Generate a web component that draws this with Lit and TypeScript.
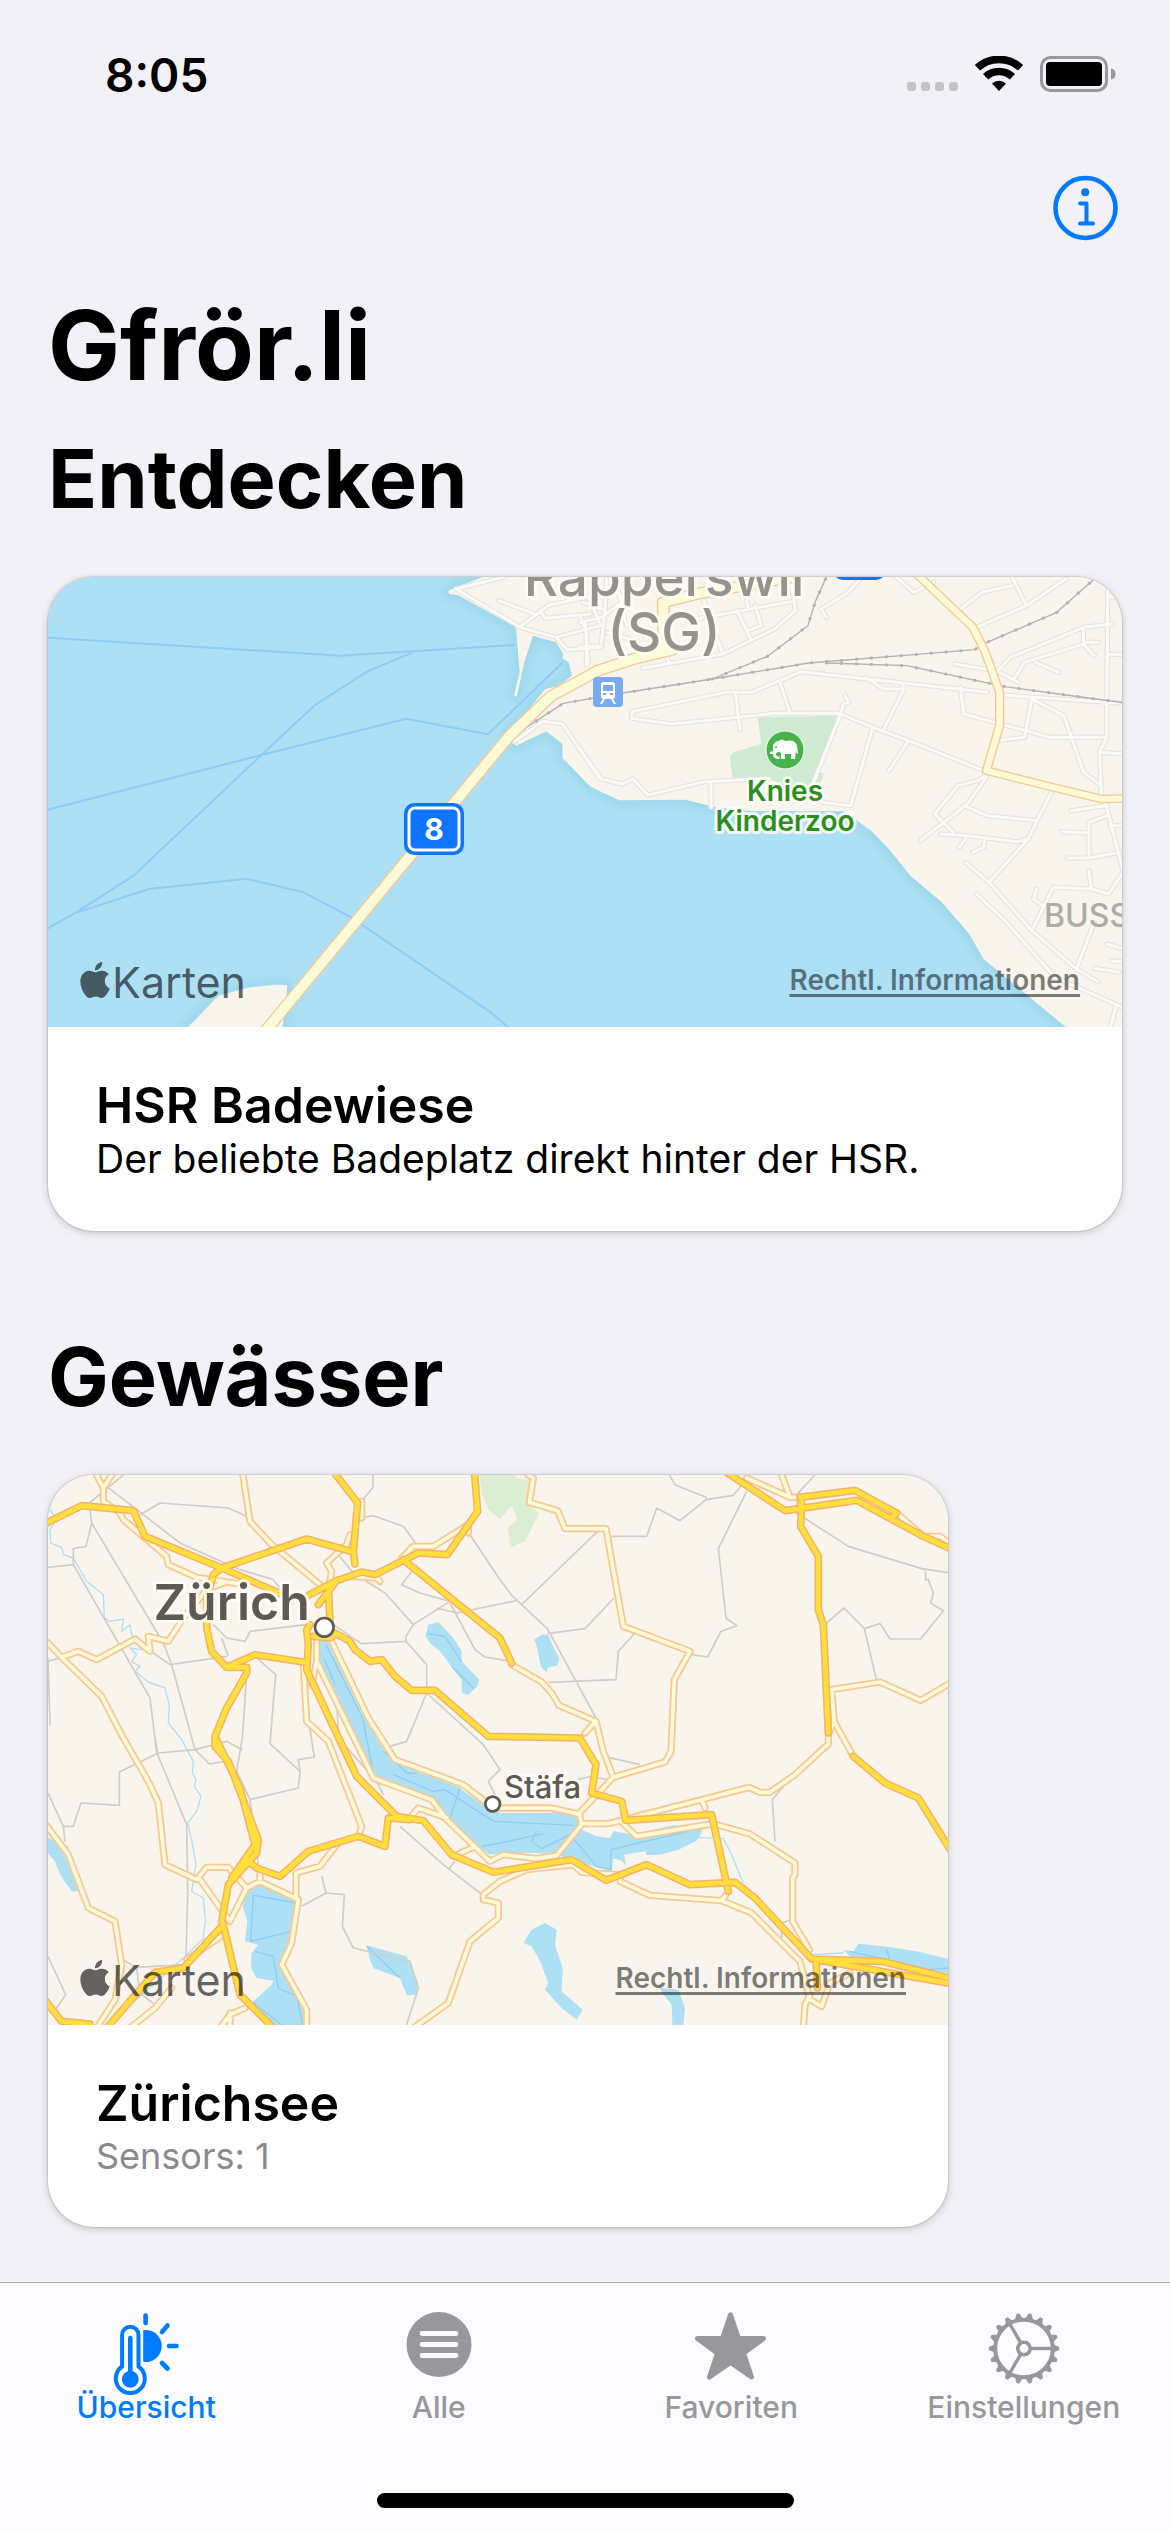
import { LitElement, html, svg, css } from "lit";
import { customElement, property, state } from "lit/decorators.js";
import { classMap } from "lit/directives/class-map.js";

/* ---------- Map of the lake shore at Rapperswil ---------- */

const shore =
  "M1240,54 1165,85 1143,95 1145,106 1170,108 1325,200 1333,210 1343,340 1327,410 1335,412 1355,315 1380,230 1445,250 1465,285 1463,298 1480,310 1490,350 1450,382 1415,390 1350,475 1310,530 1322,548 1333,560 1418,517 1463,555 1463,597 1540,682 1568,697 1622,724 1807,722 1892,745 1992,756 2252,757 2327,815 2377,870 2437,950 2525,1030 2602,1125 2642,1200 2872,1404 3060,1440 3060,30 1240,30Z " +
  "M400,1420 500,1310 580,1286 660,1277 692,1278 690,1330 676,1420Z";

const ferries =
  "M22,236 840,290 1330,258 M1042,281 917,337 770,438 620,588 262,950 105,1058 22,1108 " +
  "M22,752 620,588 1026,479 1254,526 1462,312 M105,1060 305,990 578,959 733,998 880,1080 905,1100 1262,1360 1310,1404";

const townStreets =
  "M1285,125 1385,165 M1400,155 1415,178 1540,165 M1345,203 1425,138 1530,115 M1300,54 1165,90 1345,205 1445,235 1475,272 1568,265 " +
  "M1445,235 1568,200 M1512,170 1530,220 1530,318 M1535,110 1568,195 M1328,548 1408,487 1463,495 1568,660";

const eastStreets =
  "M0,190 60,175 130,120 M75,60 70,150 60,250 M0,265 60,260 M15,190 22,315 M75,220 140,240 M10,130 60,150 M100,60 130,200 " +
  "M345,120 400,285 175,328 M240,280 248,310 M300,185 590,128 M590,54 603,155 545,210 400,285 M440,155 480,245 M490,140 508,200 470,215 M465,100 470,150 " +
  "M785,60 745,105 675,150 690,175 M885,54 935,100 990,70 M1065,150 1125,100 1210,80 M1110,205 1250,140 1360,60 M1210,54 1250,140 " +
  "M1170,335 1205,295 1410,205 1490,195 M1410,205 1410,255 1245,310 1215,360 M1410,250 1450,250 M1410,255 1440,290 M1275,310 1340,340 M1048,315 1165,335 1228,370 " +
  "M1478,80 1475,430 1475,535 1455,580 1460,720 M1480,285 1530,288 M1478,110 1530,120 M1185,408 1530,434 M1265,420 1355,470 1410,640 1460,680 M1265,420 1245,535 1165,545 " +
  "M1065,385 1075,465 1315,535 1475,535 M1460,580 1530,585 M530,660 500,660 350,668 190,708 148,660 118,675 60,660 0,570 M367,670 367,745 " +
  "M145,478 145,458 410,400 480,400 620,338 905,372 1140,400 M145,478 255,495 440,475 545,463 725,463 M435,400 448,512 M560,370 588,460 M800,355 850,390 905,390 " +
  "M905,372 905,395 848,515 M742,410 752,430 738,435 730,465 650,680 M730,465 820,505 920,545 1130,635 M820,505 758,740 680,730 M920,545 865,635 " +
  "M1135,650 1115,665 1058,680 993,765 1045,820 M1138,655 1085,735 955,843 M1075,740 1140,770 1280,785 M1325,690 1280,785 1255,840 1145,970 " +
  "M1010,825 1085,830 1225,848 1255,840 M1085,830 1063,865 M1133,840 1130,865 1100,880 M1375,755 1470,740 M1470,725 1530,975 M1350,818 1425,822 " +
  "M1425,895 1425,790 1475,770 M1365,897 1425,897 1510,880 M1485,800 1530,800 M1425,935 1432,990 M1278,990 1270,1020 1295,1040 M1265,1115 1325,985 1432,990 1480,1005 1530,925 " +
  "M1080,910 1150,975 1265,1115 1390,1230 1450,1268 M1110,1005 1190,1085 1330,1255 1530,1350 M1440,1090 1390,1230 M1440,1228 1510,1240 M1500,1345 1485,1404 M1475,1155 1530,1172 M1490,1205 1530,1210";

const rails =
  "M1355,510 1465,433 1560,415 1632,402 1882,360 2152,312 2412,290 2617,272 2652,250 2847,160 2952,60 " +
  "M1882,360 2037,292 2150,200 2172,125 2202,54 M2202,312 2427,320 2697,382 2852,405 3040,432";

const mainRoads = "M628,1420 690,1340 1315,530 1430,412 1562,335 1662,300 1772,272 M1747,265 1745,130 1842,104 2110,54";
const ringRoad = "M2450,40 2612,205 2647,280 2687,400 2687,500 2650,635 2837,685 2972,720 3050,718";

const lakeShoreMap = () => svg`
  <svg class="map" viewBox="0 0 1074 450" preserveAspectRatio="xMidYMid slice" aria-hidden="true">
    <defs>
      <filter id="shallow" x="-5%" y="-5%" width="110%" height="110%"><feGaussianBlur stdDeviation="12" /></filter>
    </defs>
    <rect width="1074" height="450" class="water" />
    <g transform="translate(-8 -18) scale(.35714 .33333)">
      <path d=${shore} fill="none" stroke="#9cd8ea" stroke-width="34" filter="url(#shallow)" />
      <path d=${ferries} class="ferry wide" />
      <path d=${shore} class="land" />
      <path d="M2010,475 2237,470 2172,640 2195,642 2180,690 2100,690 2037,655 1939,657 1932,590 1942,580 2019,555Z" fill="#cfead2" />
      <path d=${townStreets} class="street-case" />
      <g transform="translate(1512 0)"><path d=${eastStreets} class="street-case" /></g>
      <path d=${townStreets} class="street" />
      <g transform="translate(1512 0)"><path d=${eastStreets} class="street" /></g>
      <path d=${rails} class="rail" />
      <path d=${rails} class="rail-ties" />
      <path d=${mainRoads} class="pale-case" stroke-width="36" />
      <path d=${ringRoad} class="pale-case" stroke-width="26" />
      <path d=${mainRoads} class="pale" stroke-width="28" />
      <path d=${ringRoad} class="pale" stroke-width="18" />
    </g>
    <rect x="785" y="-48" width="53" height="51" rx="10" fill="#0f74ff" />
    <g text-anchor="middle">
      <g class="halo" fill="#96928c" font-size="53" font-weight="500">
        <text x="616" y="19">Rapperswil</text>
        <text x="616" y="74">(SG)</text>
      </g>
      <g class="halo" fill="#2a8f1f" font-size="28" font-weight="600">
        <text x="737" y="224">Knies</text>
        <text x="737" y="254">Kinderzoo</text>
      </g>
    </g>
    <text x="996" y="350" fill="#adaba6" font-size="32" font-weight="500">BUSS</text>
    <rect x="356" y="226" width="60" height="52" rx="10" fill="#0f74ff" />
    <rect x="361" y="231" width="50" height="42" rx="6" fill="none" stroke="#fff" stroke-width="3" />
    <text x="386" y="263" text-anchor="middle" fill="#fff" font-size="30" font-weight="700">8</text>
    <rect x="545" y="100" width="30" height="30" rx="4" fill="#78aaf0" />
    <path fill="#fff" fill-rule="evenodd"
      d="M556,105h8q3,0 3,3v11q0,3 -3,3h-8q-3,0 -3,-3v-11q0,-3 3,-3zM555,108v6h10v-6zM555,116v2h3v-2zM562,116v2h3v-2z" />
    <path d="M556,122 553,127M564,122 567,127" stroke="#fff" stroke-width="2" />
    <g transform="translate(737 173)">
      <circle r="19" fill="#45b44c" stroke="#f4fbf2" stroke-width="1" />
      <path fill="#fff"
        d="M-12,-3C-12,-7 -9,-9 -6,-9C-4,-11 -1,-10 0,-9C4,-10 11,-10 12,-4L13,3L12,4L11,1L10,9H6V4H0V9H-4L-4,3C-6,1 -9,2 -9,4C-9,7 -6,6 -5,7L-6,9C-10,9 -12,7 -12,4L-15,4V2L-12,1Z" />
      <circle cx="-9" cy="-3" r="1" fill="#45b44c" />
    </g>
  </svg>`;

/* ---------- Map of Lake Zurich ---------- */

const park = "M1318,51 1325,105 1345,155 1380,183 1415,143 1433,185 1403,210 1412,270 1455,250 1498,165 1460,130 1475,70 1430,60 1425,51Z";

const lakes =
  "M838,540 838,610 880,690 955,850 1010,955 1130,1000 1180,1030 1240,1100 1320,1168 1350,1190 1380,1185 1490,1185 1550,1190 1580,1200 1670,1228 1715,1240 1720,1202 1745,1208 1758,1225 1752,1190 1815,1180 1820,1192 1860,1190 1915,1175 1970,1148 1985,1125 1985,1110 1900,1102 1780,1130 1720,1120 1710,1140 1670,1135 1625,1115 1615,1072 1555,1055 1530,1065 1380,1065 1330,1040 1250,985 1065,915 1028,870 968,770 915,660 862,550Z " +
  "M1157,535 1165,500 1195,492 1240,540 1265,580 1265,610 1318,665 1312,685 1285,710 1265,705 1265,665 1230,620 1200,580 1170,555Z " +
  "M1483,545 1505,530 1523,530 1557,600 1553,622 1523,630 1520,642 1503,628 1490,563Z " +
  "M24,1140 45,1145 85,1165 85,1195 115,1300 95,1300 60,1250 45,1210 24,1185Z " +
  "M620,1300 665,1280 740,1310 775,1330 755,1440 725,1520 790,1660 790,1701 690,1701 635,1635 695,1580 700,1568 650,1560 633,1530 635,1485 655,1460 615,1450 622,1390 608,1345Z " +
  "M980,1462 1100,1495 1135,1575 1130,1610 1100,1612 1080,1560 1000,1530 990,1505Z " +
  "M1515,1395 1550,1415 1545,1460 1568,1530 1565,1600 1628,1655 1610,1685 1565,1650 1515,1595 1525,1575 1500,1510 1475,1465 1450,1455 1475,1415Z " +
  "M1855,1573 1865,1590 1915,1595 1935,1650 1930,1701 1897,1701 1895,1640 1862,1600Z " +
  "M2410,1475 2440,1480 2455,1457 2530,1465 2630,1480 2724,1502 2724,1545 2670,1535 2560,1510 2470,1500 2430,1495Z";

const rivers =
  "M24,145 50,185 30,215 32,255 65,268 70,290 100,300 140,370 190,410 193,480 210,490 250,483 245,520 270,500 275,530 305,575 270,570 290,590 275,610 300,625 285,640 325,672 375,690 388,740 385,795 425,845 460,910 457,945 468,965 463,985 483,1015 470,1060 443,1095 458,1160 468,1220 455,1300 490,1320 497,1390 490,1430 492,1440 430,1500 260,1650 " +
  "M1970,1138 2050,1142 2075,1190 2110,1275 M2310,1490 2410,1485";

const lakeLines =
  "M858,560 968,780 1000,945 M852,600 885,680 M1030,880 1100,945 1130,945 M1060,950 1180,1000 M1260,990 1230,1080 M1180,1000 1215,995 1360,1090 1620,1103 M1325,1165 1380,1155 1510,1127 M1490,1120 1475,1150 1505,1172 1590,1130 1670,1225 1712,1235 1712,1175 1985,1110 " +
  "M770,1335 640,1312 632,1450 755,1420 M645,1480 700,1495 715,1590 770,1615 788,1700 M640,1635 725,1700 M980,1465 1080,1560 M1160,527 1215,535 1265,612 M1235,625 1300,690 M2430,1480 2670,1535 2724,1530 M2540,1475 2550,1510";

const borders =
  "M24,328 100,320 330,720 350,885 M100,320 100,272 138,265 155,195 148,135 250,51 M155,195 370,555 395,620 465,875 M200,85 420,255 600,335 700,365 720,390 M300,170 360,135 565,150 625,178 M999,51 999,88 965,130 M965,180 1000,173 1090,205 1130,260 " +
  "M24,610 65,598 M340,585 390,620 560,595 M520,500 560,540 615,550 630,520 800,500 M545,540 565,595 M640,590 707,650 690,857 M620,650 607,840 M1290,230 1380,365 1415,412 1445,440 1522,512 1668,780 M895,290 940,345 1035,405 1120,500 1230,430 1140,405 1085,380 1130,320 " +
  "M1190,450 1250,465 1428,428 M1230,435 1305,575 1335,597 1400,608 M880,500 965,557 1098,550 1098,535 1120,500 M1098,550 1160,620 1160,705 1100,850 M1160,705 1330,860 1380,935 1345,970 1365,1010 M24,600 30,800 " +
  "M1445,440 1675,218 M1710,235 1820,235 1850,150 1920,188 1998,125 1998,118 1905,80 1888,51 M1998,125 2080,112 2130,51 M2120,100 2035,272 2058,480 2090,503 2043,520 2003,597 1955,590 M1522,527 1635,512 1722,420 M1525,673 1728,665 1735,580 1785,525 " +
  "M2325,51 2270,110 2270,165 2425,265 2645,332 2724,344 M2657,335 2657,365 2665,365 2680,405 2672,435 2710,458 2642,543 2550,543 2520,497 2473,512 2412,450 2360,495 M2473,512 2510,668 " +
  "M24,1005 70,1105 75,1150 M70,1105 100,1105 123,1035 238,1042 238,942 355,885 465,875 560,850 607,875 M345,840 355,895 440,1100 443,1300 438,1500 M465,875 508,918 555,910 M607,840 590,940 630,1025 655,1220 M630,1025 775,990 780,940 690,857 M780,940 775,905 823,897 800,750 " +
  "M890,720 895,840 1010,970 1030,1010 M1050,865 1100,850 M1080,1105 1210,1220 1320,1305 M1245,1210 1225,1235 M785,1345 858,1305 845,1255 M858,1305 913,1310 907,1405 940,1470 1110,1510 1135,1590 1100,1700 M24,1495 77,1610 50,1650 M250,1505 290,1530 300,1605 345,1640 M290,1528 430,1520 " +
  "M1705,898 1800,920 M1540,985 1650,955 1705,965 M2230,985 2197,1025 2205,1150 M2225,1395 2260,1383 M2225,1395 2225,1450";

const paleRoads =
  "M170,51 190,90 190,130 240,165 250,185 380,295 385,320 470,358 600,378 M215,51 190,90 M609,51 630,190 690,255 840,380 M24,555 65,598 115,580 170,605 285,543 330,580 325,535 385,550 430,480 500,395 550,375 " +
  "M65,598 185,715 250,840 325,970 355,1035 375,1220 470,1265 500,1228 565,1228 620,1290 660,1270 775,1325 755,1455 725,1520 800,1655 800,1710 M480,1265 570,1390 620,1290 M660,1240 660,1270 M768,1320 768,1245 840,1225 890,1160 " +
  "M10,1090 85,1190 145,1350 225,1390 245,1520 225,1625 170,1710 M550,1430 440,1505 M395,1590 345,1650 270,1710 M540,1710 570,1670 615,1650 M570,1665 570,1710 " +
  "M830,540 830,610 1000,960 1175,1025 1220,1085 1350,1210 1390,1190 1490,1202 1550,1192 1625,1100 1618,1065 1720,958 M830,610 815,680 M1305,1165 1240,1195 M1110,1080 1135,1050 1220,1080 M790,615 800,790 865,850 965,1105 955,1135 " +
  "M870,540 985,780 1065,905 1270,980 1360,1050 1535,1050 1615,1068 M1625,1097 1705,1097 1740,1088 1790,1135 2020,1097 2130,1128 2265,1215 2265,1250 2258,1260 2258,1390 2308,1475 M1985,1025 1995,1050 " +
  "M2365,825 2365,858 2265,950 2190,1003 2160,1003 2128,988 1985,1025 1740,1088 M1720,958 1875,912 1893,880 1903,665 1950,580 1750,505 1698,212 1575,212 1553,158 1468,133 1480,60 1465,51 " +
  "M1415,620 1505,672 1535,705 1557,742 1668,790 1690,880 1720,958 M1668,790 1635,825 M2365,830 2382,790 2375,695 2520,672 2642,727 2740,670 M2382,790 2440,895 M2225,51 2250,118 2285,118 M2120,60 2250,118 M2570,165 2650,235 2700,235 2740,265 " +
  "M1085,300 1120,265 1180,265 1285,200 1285,225 M930,230 920,260 860,315 875,340 870,370 M965,130 965,180 M925,355 1010,360 1020,370 M1600,1220 1460,1235 1380,1270 1330,1310 1330,1325 1375,1335 1375,1380 1290,1450 1225,1635 1120,1710 " +
  "M1600,1220 1625,1243 1740,1250 1740,1270 1830,1312 2045,1328 2135,1365 2280,1510 2310,1625 2345,1645 2370,1575 2430,1545 M2045,1328 2065,1300 M2310,1610 2295,1640 2290,1710";

const highways =
  "M10,200 125,143 280,158 315,235 545,330 740,415 M545,330 800,243 940,282 M880,40 953,135 940,282 945,318 M545,330 520,350 500,420 500,510 515,580 560,628 645,590 790,612 M560,628 620,628 620,645 560,750 525,835 525,865 565,910 655,1145 650,1185 565,1280 545,1390 550,1400 600,1610 700,1710 " +
  "M525,835 600,990 645,1160 575,1260 M625,1210 650,1230 720,1255 805,1180 955,1135 1035,1165 1045,1080 1110,1085 M550,1400 430,1530 345,1543 200,1710 M10,1620 65,1690 150,1698 " +
  "M1303,40 1313,160 1222,290 1135,285 1005,350 965,342 890,368 805,412 M890,368 835,440 M865,390 870,490 M1090,305 1380,540 1415,615 M820,535 870,540 885,525 930,550 945,575 990,610 1025,605 1065,655 1115,697 1185,697 1345,835 1620,840 1668,920 1655,1005 1745,1030 1757,1087 2015,1070 2065,1300 " +
  "M810,500 800,515 805,560 800,635 950,955 1070,1075 1150,1088 1235,1190 1360,1243 1595,1205 1698,1267 1820,1220 1950,1280 2085,1273 2145,1320 2315,1503 2525,1510 2740,1563 M2315,1503 2740,1578 M2328,1510 2333,1590 " +
  "M2055,40 2235,158 2450,127 2650,235 2740,276 M2280,118 2445,97 2570,165 2555,180 M2285,118 2282,205 2335,295 2335,455 2350,500 2365,825 M2440,895 2535,975 2635,1020 2740,1190";

const lakeZurichMap = () => svg`
  <svg class="map" viewBox="24 51 2700 1650" preserveAspectRatio="xMidYMid slice" aria-hidden="true">
    <rect x="24" y="51" width="2700" height="1650" class="land" />
    <path d=${park} fill="#dbeed2" />
    <path d=${lakes} class="water" />
    <path d=${rivers} fill="none" stroke="#ade0f5" stroke-width="4" />
    <path d=${lakeLines} class="ferry" />
    <path d=${borders} class="border" />
    <path d=${paleRoads} class="pale-case" stroke-width="22" />
    <path d=${paleRoads} class="pale" stroke-width="11" />
    <path d=${highways} class="highway-case" />
    <path d=${highways} class="highway" />
    <g class="halo large" fill="#5c5a52">
      <text x="575" y="487" text-anchor="middle" font-size="150" font-weight="600">Zürich</text>
      <text x="1392" y="1020" font-size="93" font-weight="500">Stäfa</text>
    </g>
    <g fill="#fff" stroke="#5c5a52" stroke-width="8">
      <circle cx="853" cy="508" r="28" />
      <circle cx="1358" cy="1038" r="22" />
    </g>
  </svg>`;

/* ---------- Card ---------- */

@customElement("place-card")
export class PlaceCard extends LitElement {
  @property() heading = "";
  @property() detail = "";
  @property({ type: Boolean }) muted = false;
  @property({ attribute: false }) artwork: unknown = null;

  static styles = css`
    :host {
      display: block;
    }
    .card {
      border-radius: 46px;
      background: #fff;
      overflow: hidden;
      box-shadow: 0 0 2px rgba(0, 0, 0, 0.35), 0 2px 8px rgba(0, 0, 0, 0.18);
    }
    .stage {
      position: relative;
      height: var(--map-height, 450px);
    }
    .map {
      display: block;
      width: 100%;
      height: 100%;
      font-family: Inter, "Liberation Sans", sans-serif;
    }
    .map path {
      stroke-linejoin: round;
    }
    .water {
      fill: #ade0f5;
    }
    .land {
      fill: #f9f4ec;
    }
    .ferry {
      fill: none;
      stroke: #8ccdf5;
      stroke-width: 4;
    }
    .ferry.wide {
      stroke-width: 6;
    }
    .street,
    .street-case,
    .rail,
    .rail-ties,
    .pale,
    .pale-case,
    .highway,
    .highway-case {
      fill: none;
      stroke-linecap: round;
    }
    .street-case {
      stroke: #e6e2dc;
      stroke-width: 15;
    }
    .street {
      stroke: #fafaf9;
      stroke-width: 9;
    }
    .rail {
      stroke: #b4b2ae;
      stroke-width: 4;
    }
    .rail-ties {
      stroke: #b4b2ae;
      stroke-width: 9;
      stroke-dasharray: 1 41;
    }
    .pale-case {
      stroke: #f7c896;
    }
    .pale {
      stroke: #fdfad8;
    }
    .highway-case {
      stroke: #f6b06c;
      stroke-width: 23;
    }
    .highway {
      stroke: #ffdf3a;
      stroke-width: 14;
    }
    .border {
      fill: none;
      stroke: #d0cdc7;
      stroke-width: 5;
    }
    .halo {
      paint-order: stroke;
      stroke: rgba(255, 252, 248, 0.85);
      stroke-width: 6;
      stroke-linejoin: round;
    }
    .halo.large {
      stroke-width: 18;
    }
    .credits {
      position: absolute;
      inset: auto 42px 18px 32px;
      display: flex;
      justify-content: space-between;
      align-items: flex-end;
    }
    .brand {
      display: flex;
      align-items: baseline;
      gap: 2px;
      font-size: 43px;
      line-height: 54px;
      color: rgba(0, 0, 0, 0.6);
    }
    .brand svg {
      width: 30px;
      height: 36px;
      fill: currentColor;
    }
    .legal {
      margin-bottom: 14px;
      font-size: 28px;
      line-height: 30px;
      font-weight: 600;
      color: rgba(0, 0, 0, 0.5);
      text-decoration: underline 3px;
      text-underline-offset: 4px;
      text-decoration-skip-ink: none;
    }
    .body {
      padding: 48px;
    }
    .heading {
      margin: 0;
      font-size: 50px;
      line-height: 60px;
      font-weight: 600;
    }
    .detail {
      margin: 0;
      font-size: 39px;
      line-height: 48px;
    }
    .detail.muted {
      font-size: 36px;
      line-height: 46px;
      color: #8a8a8e;
    }
  `;

  render() {
    return html`
      <article class="card">
        <div class="stage">
          ${this.artwork}
          <div class="credits">
            <span class="brand">
              <svg viewBox="2 0 20 24" aria-hidden="true">
                <path
                  d="M12.152 6.896c-.948 0-2.415-1.078-3.96-1.04-2.04.027-3.91 1.183-4.961 3.014-2.117 3.675-.546 9.103 1.519 12.09 1.013 1.454 2.208 3.09 3.792 3.039 1.52-.065 2.09-.987 3.935-.987 1.831 0 2.35.987 3.96.948 1.637-.026 2.676-1.48 3.676-2.948 1.156-1.688 1.636-3.325 1.662-3.415-.039-.013-3.182-1.221-3.22-4.857-.026-3.04 2.48-4.494 2.597-4.559-1.429-2.09-3.623-2.324-4.39-2.376-2-.156-3.675 1.09-4.61 1.09zM15.53 3.83c.843-1.012 1.4-2.427 1.245-3.83-1.207.052-2.662.805-3.532 1.818-.78.896-1.454 2.338-1.273 3.714 1.338.104 2.715-.688 3.559-1.701"
                />
              </svg>
              Karten
            </span>
            <a class="legal" href="#legal">Rechtl. Informationen</a>
          </div>
        </div>
        <div class="body">
          <h3 class="heading">${this.heading}</h3>
          <p class=${classMap({ detail: true, muted: this.muted })}>${this.detail}</p>
        </div>
      </article>
    `;
  }
}

/* ---------- Tab icons ---------- */

const thermometerIcon = svg`
  <g fill="none" stroke="currentColor" stroke-width="4" stroke-linecap="round">
    <path d="M42.5,55.5V24a8.2,8.2 0 0 0 -16.4,0V55.5a14.5,14.5 0 1 0 16.4,0Z" stroke-linejoin="round" />
    <path d="M34.3,27V66" stroke-width="4.6" />
    <path d="M49.6,4.5V12M66,21 71.5,14.5M73,35H80.5M66,52 71.5,57.5" stroke-width="4.6" />
  </g>
  <circle cx="34.3" cy="68.3" r="8.4" fill="currentColor" />
  <path d="M47.2,19.2A16,16 0 1 1 47.2,50.8Z" fill="currentColor" />`;

const listIcon = svg`
  <circle cx="50" cy="33.5" r="32.5" fill="currentColor" />
  <path d="M33,22.5H67M33,33.5H67M33,44.5H67" stroke="#fbfbfd" stroke-width="4.8" stroke-linecap="round" />`;

const starIcon = svg`
  <path fill="currentColor" stroke="currentColor" stroke-width="5" stroke-linejoin="round"
    d="M49.5,3.8 57.5,27.5H82.5L62.5,42.3 70.5,66 49.5,51.5 28.5,66 36.5,42.3 16.5,27.5H41.5Z" />`;

const gearTeeth = Array.from({ length: 18 }, (_, i) => i * 20);
const gearIcon = svg`
  <g transform="translate(50 37.5)" fill="none" stroke="currentColor">
    <circle r="28.8" stroke-width="4" />
    <circle r="6.2" stroke-width="3.6" />
    ${[0, 120, 240].map((a) => svg`<path d="M7,0H28" stroke-width="3.4" transform="rotate(${a})" />`)}
    ${gearTeeth.map((a) => svg`<path d="M29.5,-3.2 34.6,-1V1L29.5,3.2Z" fill="currentColor" stroke-width="1.4" stroke-linejoin="round" transform="rotate(${a})" />`)}
  </g>`;

const tabs = [
  { id: "overview", label: "Übersicht", icon: thermometerIcon },
  { id: "all", label: "Alle", icon: listIcon },
  { id: "favorites", label: "Favoriten", icon: starIcon },
  { id: "settings", label: "Einstellungen", icon: gearIcon },
];

/* ---------- Page ---------- */

@customElement("app-root")
export class AppRoot extends LitElement {
  @state() private active = "overview";

  static styles = css`
    :host {
      display: flex;
      flex-direction: column;
      min-height: 100vh;
      background: #f2f1f7;
      color: #000;
      font-family: Inter, "Liberation Sans", sans-serif;
    }
    button {
      margin: 0;
      padding: 0;
      border: 0;
      background: none;
      font: inherit;
      color: inherit;
    }
    .status {
      display: flex;
      justify-content: space-between;
      align-items: center;
      height: 150px;
      padding: 0 54px 0 105px;
    }
    .time {
      font-size: 46px;
      line-height: 56px;
      font-weight: 600;
    }
    .signals {
      width: 209px;
      height: 38px;
    }
    .toolbar {
      display: flex;
      justify-content: flex-end;
      align-items: center;
      height: 115px;
      padding: 0 51px;
    }
    .info {
      display: block;
      width: 66px;
      height: 66px;
      color: #007aff;
    }
    .info svg {
      display: block;
      width: 100%;
      height: 100%;
    }
    main {
      flex: 1;
      padding: 20px 48px 48px;
    }
    h1,
    h2 {
      margin: 0;
      font-weight: 700;
    }
    h1 {
      font-size: 96px;
      line-height: 120px;
    }
    h2 {
      font-size: 81px;
      line-height: 100px;
    }
    .section {
      margin-top: 24px;
    }
    .section + .section {
      margin-top: 96px;
    }
    .row {
      display: flex;
      gap: 48px;
      margin-top: 48px;
    }
    .full {
      flex: 1;
    }
    .peek {
      flex: 0 0 calc(100% - 174px);
      --map-height: 550px;
    }
    .tabbar {
      border-top: 1px solid #a9a9ac;
      background: #fbfbfd;
    }
    .tabs {
      display: grid;
      grid-template-columns: repeat(4, 1fr);
      padding: 28px 0 68px;
    }
    .tab {
      display: flex;
      flex-direction: column;
      align-items: center;
      font-size: 30px;
      line-height: 36px;
      font-weight: 500;
      color: #98989b;
    }
    .tab.active {
      color: #007aff;
    }
    .tab svg {
      width: 100px;
      height: 78px;
      overflow: visible;
    }
    .home {
      width: 417px;
      height: 15px;
      margin: 0 auto 24px;
      border-radius: 8px;
      background: #000;
    }
  `;

  render() {
    return html`
      <header>
        <div class="status">
          <span class="time">8:05</span>
          <svg class="signals" viewBox="0 0 209 38" aria-hidden="true">
            <g fill="#c3c3c8">
              ${[0, 14, 28, 42].map((x) => svg`<rect x=${x} y="26" width="9" height="9" rx="3" />`)}
            </g>
            <g transform="translate(92 35)">
              <g fill="none" stroke="#000" stroke-width="7.6">
                <path d="M-21.6,-23.2A31.8,31.8 0 0 1 21.6,-23.2" />
                <path d="M-13.4,-14.2A19.5,19.5 0 0 1 13.4,-14.2" />
              </g>
              <path d="M-7,-7.4A10.3,10.3 0 0 1 7,-7.4L0,0Z" />
            </g>
            <rect x="134.5" y="1.5" width="65" height="33" rx="9" fill="none" stroke="#98979b" stroke-width="3" />
            <rect x="139" y="6" width="56" height="24" rx="4" />
            <path d="M204,12.5a5.6,5.6 0 0 1 0,11z" fill="#98979b" />
          </svg>
        </div>
        <div class="toolbar">
          <button class="info" type="button" aria-label="Info">
            <svg viewBox="0 0 66 66" aria-hidden="true">
              <g fill="none" stroke="currentColor" stroke-width="4.6">
                <circle cx="32.5" cy="33" r="30" />
                <path d="M27.2,28.5H33.5V48.5M27,48.5H40" stroke-width="4" stroke-linecap="round" stroke-linejoin="round" />
              </g>
              <circle cx="32.2" cy="17.3" r="4" fill="currentColor" />
            </svg>
          </button>
        </div>
      </header>
      <main>
        <h1>Gfrör.li</h1>
        <section class="section">
          <h2>Entdecken</h2>
          <div class="row">
            <place-card
              class="full"
              heading="HSR Badewiese"
              detail="Der beliebte Badeplatz direkt hinter der HSR."
              .artwork=${lakeShoreMap()}
            ></place-card>
          </div>
        </section>
        <section class="section">
          <h2>Gewässer</h2>
          <div class="row">
            <place-card class="peek" heading="Zürichsee" detail="Sensors: 1" muted .artwork=${lakeZurichMap()}></place-card>
          </div>
        </section>
      </main>
      <nav class="tabbar">
        <div class="tabs">
          ${tabs.map(
            (tab) => html`
              <button
                type="button"
                class=${classMap({ tab: true, active: tab.id === this.active })}
                @click=${() => (this.active = tab.id)}
              >
                <svg viewBox="0 0 100 78" aria-hidden="true">${tab.icon}</svg>
                ${tab.label}
              </button>
            `
          )}
        </div>
        <div class="home"></div>
      </nav>
    `;
  }
}
